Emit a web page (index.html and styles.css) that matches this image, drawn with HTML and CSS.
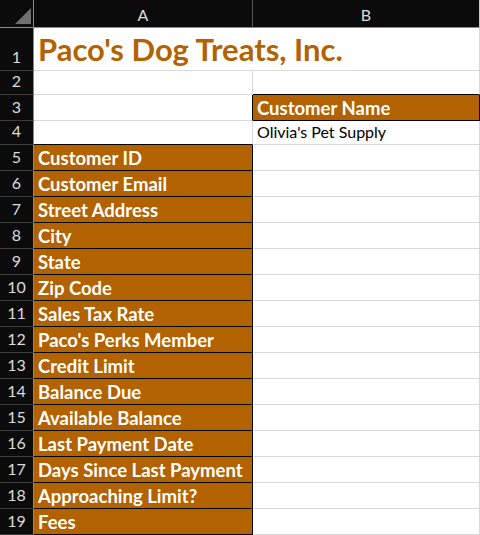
FILE: index.html
```html
<!DOCTYPE html>
<html>
<head>
<meta charset="utf-8">
<link rel="stylesheet" href="styles.css">
</head>
<body>
<div class="sheet">
  <div class="corner hdr"><span class="tri"></span></div>
  <div class="colhdr hdr">A</div>
  <div class="colhdr hdr last">B</div>

  <div class="rowhdr r1">1</div>
  <div class="cell r1 title">Paco's Dog Treats, Inc.</div>
  <div class="cell r1 b"></div>

  <div class="rowhdr r2">2</div>
  <div class="cell r2"></div>
  <div class="cell r2 b above-box"></div>

  <div class="rowhdr r3">3</div>
  <div class="cell r3 left-of-box"></div>
  <div class="cell r3 b fill">Customer Name</div>

  <div class="rowhdr r4">4</div>
  <div class="cell r4 above-box"></div>
  <div class="cell r4 b val">Olivia's Pet Supply</div>

  <div class="rowhdr">5</div><div class="cell fill a">Customer ID</div><div class="cell b"></div>
  <div class="rowhdr">6</div><div class="cell fill a">Customer Email</div><div class="cell b"></div>
  <div class="rowhdr">7</div><div class="cell fill a">Street Address</div><div class="cell b"></div>
  <div class="rowhdr">8</div><div class="cell fill a">City</div><div class="cell b"></div>
  <div class="rowhdr">9</div><div class="cell fill a">State</div><div class="cell b"></div>
  <div class="rowhdr">10</div><div class="cell fill a">Zip Code</div><div class="cell b"></div>
  <div class="rowhdr">11</div><div class="cell fill a">Sales Tax Rate</div><div class="cell b"></div>
  <div class="rowhdr">12</div><div class="cell fill a">Paco's Perks Member</div><div class="cell b"></div>
  <div class="rowhdr">13</div><div class="cell fill a">Credit Limit</div><div class="cell b"></div>
  <div class="rowhdr">14</div><div class="cell fill a">Balance Due</div><div class="cell b"></div>
  <div class="rowhdr">15</div><div class="cell fill a">Available Balance</div><div class="cell b"></div>
  <div class="rowhdr">16</div><div class="cell fill a">Last Payment Date</div><div class="cell b"></div>
  <div class="rowhdr">17</div><div class="cell fill a">Days Since Last Payment</div><div class="cell b"></div>
  <div class="rowhdr">18</div><div class="cell fill a">Approaching Limit?</div><div class="cell b"></div>
  <div class="rowhdr">19</div><div class="cell fill a">Fees</div><div class="cell b"></div>
</div>
</body>
</html>
```
FILE: styles.css
```css
* { box-sizing: border-box; }
html, body { margin: 0; padding: 0; background: #ffffff; }
.sheet {
  display: grid;
  grid-template-columns: 34px 219px 227px;
  grid-template-rows: 28px 43px 24px 26px 24px repeat(15, 26px);
  width: 480px;
  height: 535px;
  overflow: hidden;
  font-family: Lato, "Open Sans", sans-serif;
}
.hdr {
  background: #0b0b0b;
  color: #dcdcdc;
  border-bottom: 1px solid #8a8a8a;
  border-right: 1px solid #5a5a5a;
}
.corner { position: relative; border-right-color: #8a8a8a; }
.tri {
  position: absolute;
  right: 2px;
  bottom: 3px;
  width: 0;
  height: 0;
  border-left: 16px solid transparent;
  border-bottom: 16px solid #6f6f6f;
}
.colhdr {
  display: flex;
  align-items: center;
  justify-content: center;
  font-size: 16px;
  padding-top: 1px;
}
.colhdr.last { border-right-color: #c8c8c8; }
.rowhdr {
  background: #0b0b0b;
  color: #dcdcdc;
  border-right: 1px solid #8a8a8a;
  border-bottom: 1px solid #3c3c3c;
  display: flex;
  align-items: flex-end;
  justify-content: center;
  font-size: 16px;
  line-height: 1;
  padding-bottom: 5px;
}
.cell {
  border-right: 1px solid #d9d9d9;
  border-bottom: 1px solid #d9d9d9;
  display: flex;
  align-items: flex-end;
  padding-left: 4px;
  padding-bottom: 3px;
  white-space: nowrap;
  line-height: 1;
  font-size: 16px;
  color: #000;
}
.title {
  color: #b36200;
  font-weight: 700;
  font-size: 31px;
  padding-bottom: 5px;
  overflow: visible;
  border-right-color: #ffffff;
}
.fill {
  background: #b36200;
  color: #ffffff;
  font-weight: 700;
  font-size: 18.5px;
  border-right-color: #000;
  border-bottom-color: #000;
  padding-bottom: 3px;
}
.above-box { border-bottom-color: #000; }
.left-of-box { border-right-color: #000; }
.val { font-size: 16px; padding-bottom: 4px; }
```
